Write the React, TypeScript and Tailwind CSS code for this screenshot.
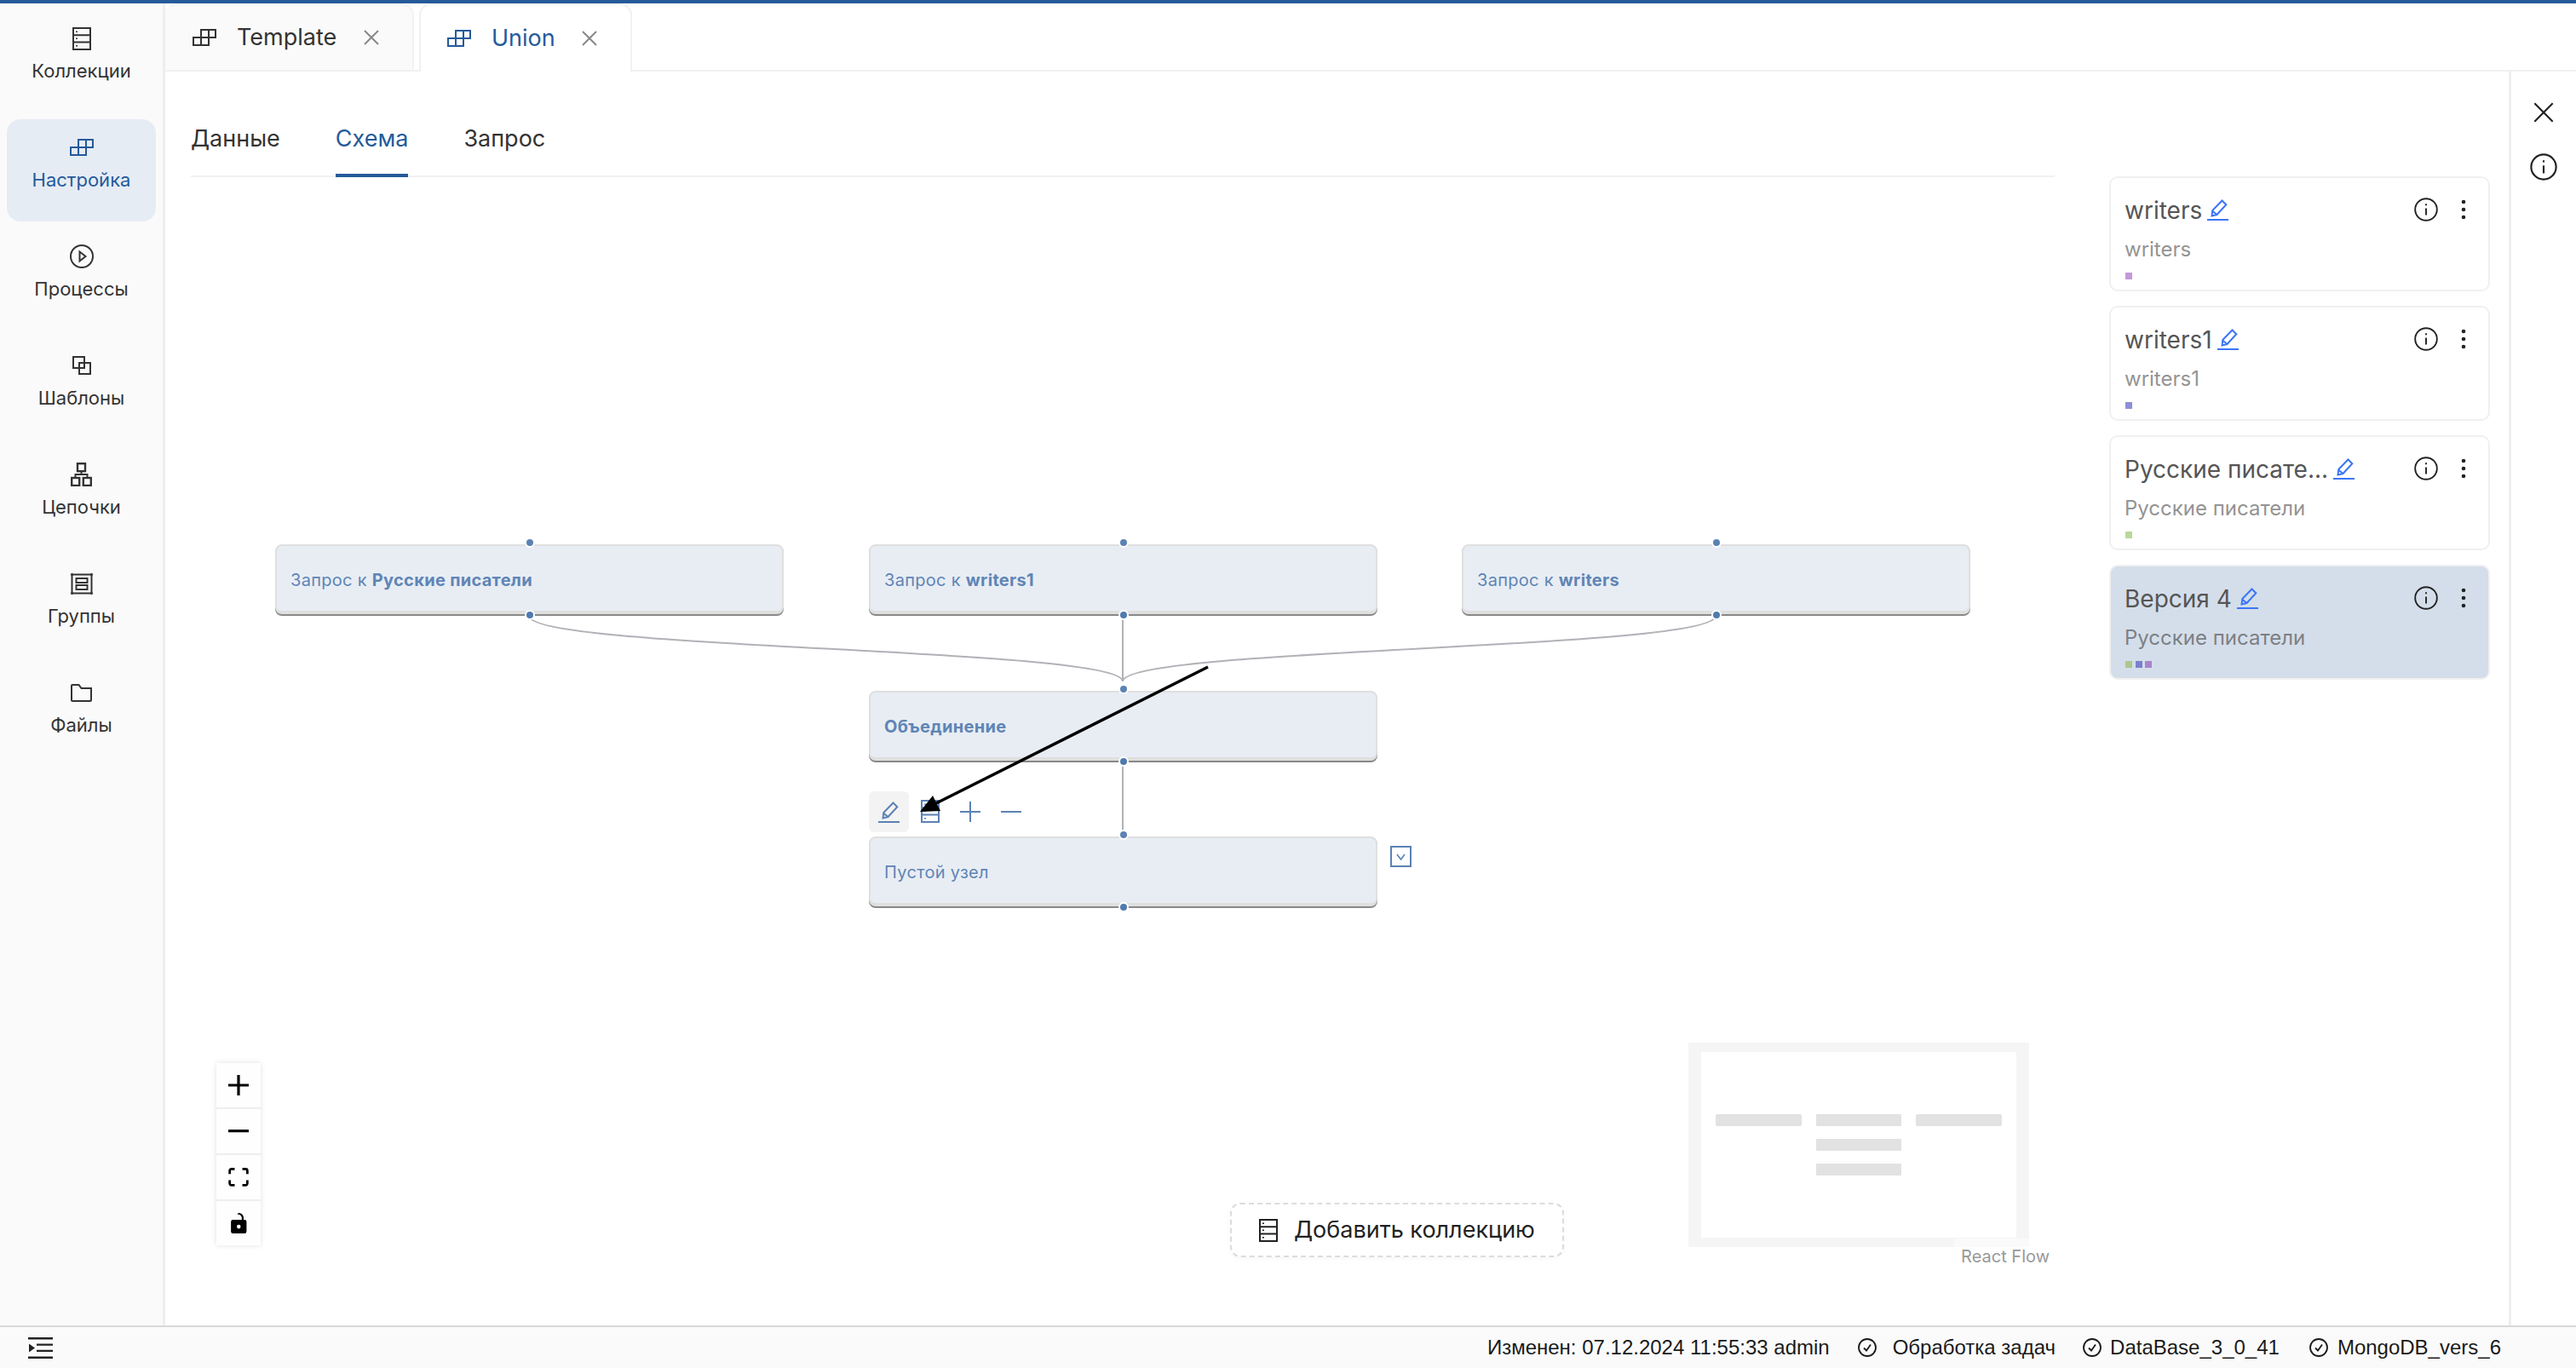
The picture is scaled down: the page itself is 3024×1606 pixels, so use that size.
import type { ReactNode } from "react";

function LayoutIcon() {
  return (
    <svg width="28" height="20" viewBox="0 0 28 20" fill="none" stroke="currentColor" strokeWidth="2">
      <path d="M1 10h18v9H1zM10 10v9M10 10V1h17v9h-8v-9M19 10v9" />
    </svg>
  );
}

function CollectionIcon({ className = "" }: { className?: string }) {
  return (
    <svg width="22" height="27" viewBox="0 0 22 27" fill="none" stroke="currentColor" strokeWidth="2" className={className}>
      <rect x="1" y="1" width="20" height="25" />
      <path d="M1 9.3h20M1 17.6h20" />
      <path d="M5 4.5v1.5M5 12.5v1.5M5 21v1.5" />
    </svg>
  );
}

function PlayIcon() {
  return (
    <svg width="28" height="28" viewBox="0 0 28 28" fill="none" stroke="currentColor" strokeWidth="2">
      <circle cx="14" cy="14" r="13" />
      <path d="M11.5 8.5v11l7-5.5z" />
    </svg>
  );
}

function TemplateIcon() {
  return (
    <svg width="22" height="22" viewBox="0 0 22 22" fill="none" stroke="currentColor" strokeWidth="2">
      <rect x="1" y="1" width="13" height="13" />
      <rect x="8" y="8" width="13" height="13" />
    </svg>
  );
}

function ChainIcon() {
  return (
    <svg width="25" height="28" viewBox="0 0 25 28" fill="none" stroke="currentColor" strokeWidth="2.4">
      <rect x="8" y="1.2" width="9" height="9" />
      <rect x="1.2" y="18" width="9" height="9" />
      <rect x="14.8" y="18" width="9" height="9" />
      <path d="M12.5 10v4M5.5 18v-4h14v4" strokeWidth="2" />
    </svg>
  );
}

function GroupIcon() {
  return (
    <svg width="28" height="27" viewBox="0 0 28 27" fill="none" stroke="currentColor" strokeWidth="2">
      <rect x="2.5" y="2.5" width="23" height="22" />
      <rect x="7.5" y="7" width="13" height="5" />
      <rect x="7.5" y="15" width="13" height="5" />
      <circle cx="2.5" cy="2.5" r="1.2" strokeWidth="1" />
      <circle cx="25.5" cy="2.5" r="1.2" strokeWidth="1" />
      <circle cx="2.5" cy="24.5" r="1.2" strokeWidth="1" />
      <circle cx="25.5" cy="24.5" r="1.2" strokeWidth="1" />
    </svg>
  );
}

function FolderIcon() {
  return (
    <svg width="25" height="21" viewBox="0 0 25 21" fill="none" stroke="currentColor" strokeWidth="2">
      <path d="M1 2V19a1 1 0 0 0 1 1H23a1 1 0 0 0 1-1V5H12.5L9.5 1H2a1 1 0 0 0-1 1z" />
    </svg>
  );
}

function PencilIcon({ className = "" }: { className?: string }) {
  return (
    <svg width="25" height="25" viewBox="0 0 25 25" fill="none" stroke="currentColor" strokeWidth="2" className={className}>
      <path d="M0 24h25" />
      <path d="M5.5 19.5l.8-6.5L17.5 1.5l4.8 4.8L11.5 18z" />
      <path d="M6 13.5l5.5 4.5" />
    </svg>
  );
}

function InfoIcon({ size = 28 }: { size?: number }) {
  return (
    <svg width={size} height={size} viewBox="0 0 28 28" fill="none" stroke="currentColor" strokeWidth="1.9">
      <circle cx="14" cy="14" r="12.8" />
      <path d="M14 12.5v8" />
      <path d="M14 7.2v2" />
    </svg>
  );
}

function DotsIcon() {
  return (
    <svg width="6" height="24" viewBox="0 0 6 24" fill="currentColor">
      <circle cx="3" cy="3" r="2.3" />
      <circle cx="3" cy="12" r="2.3" />
      <circle cx="3" cy="21" r="2.3" />
    </svg>
  );
}

function CloseIcon({ size = 18 }: { size?: number }) {
  return (
    <svg width={size} height={size} viewBox="0 0 18 18" fill="none" stroke="currentColor" strokeWidth={size > 20 ? 1.6 : 2}>
      <path d="M1 1l16 16M17 1L1 17" />
    </svg>
  );
}

function CheckCircle() {
  return (
    <svg width="22" height="22" viewBox="0 0 22 22" fill="none" stroke="currentColor" strokeWidth="1.8">
      <circle cx="11" cy="11" r="10" />
      <path d="M7 11.5l3 3 5-7" />
    </svg>
  );
}

const navItems: { label: string; icon: ReactNode; active?: boolean }[] = [
  { label: "Коллекции", icon: <CollectionIcon /> },
  { label: "Настройка", icon: <LayoutIcon />, active: true },
  { label: "Процессы", icon: <PlayIcon /> },
  { label: "Шаблоны", icon: <TemplateIcon /> },
  { label: "Цепочки", icon: <ChainIcon /> },
  { label: "Группы", icon: <GroupIcon /> },
  { label: "Файлы", icon: <FolderIcon /> },
];

function Sidebar() {
  return (
    <aside className="flex w-[194px] shrink-0 flex-col gap-[8px] border-r-[3px] border-[#eeeeee] bg-[#fafafa] px-[8px] pt-[8px]">
      {navItems.map((item) => (
        <div
          key={item.label}
          className={
            item.active
              ? "flex h-[120px] flex-col items-center rounded-[16px] bg-[#e6ecf4] pt-[19px] text-[#255a9a]"
              : "flex h-[120px] flex-col items-center rounded-[16px] pt-[19px] text-[#333333]"
          }
        >
          <div className="flex h-[28px] items-center justify-center">{item.icon}</div>
          <div className="mt-[11px] text-[22px] leading-[26px]">{item.label}</div>
        </div>
      ))}
    </aside>
  );
}

function TopTabs() {
  return (
    <div className="flex h-[80px] shrink-0 items-end gap-[6px] border-b-2 border-[#f1f1f1]">
      <div className="flex h-[78px] w-[292px] items-center rounded-t-[14px] border-2 border-b-0 border-l-0 border-[#f3f3f3] bg-[#fafafa] pl-[32px] text-[#333333]">
        <LayoutIcon />
        <span className="ml-[24px] text-[27px]">Template</span>
        <span className="ml-[32px] text-[#888888]"><CloseIcon /></span>
      </div>
      <div className="-mb-[2px] flex h-[80px] w-[250px] items-center rounded-t-[14px] border-2 border-b-0 border-[#f1f1f1] bg-white pl-[31px] text-[#255a9a]">
        <LayoutIcon />
        <span className="ml-[24px] text-[27px]">Union</span>
        <span className="ml-[31px] text-[#888888]"><CloseIcon /></span>
      </div>
    </div>
  );
}

function SubTabs() {
  return (
    <div className="flex h-[124px] shrink-0 items-end gap-[65px] border-b-2 border-[#f1f1f1] text-[27px] leading-[34px]">
      <div className="-mb-[2px] border-b-4 border-transparent pb-[24px] text-[#333333]">Данные</div>
      <div className="-mb-[2px] border-b-4 border-[#255a9a] pb-[24px] text-[#255a9a]">Схема</div>
      <div className="-mb-[2px] border-b-4 border-transparent pb-[24px] text-[#333333]">Запрос</div>
    </div>
  );
}

function FlowNode({ className, children }: { className: string; children: ReactNode }) {
  return (
    <div className={"absolute flex h-[82px] w-[597px] items-center rounded-[8px] border-2 border-b-4 border-[#dfdfdf] bg-[#e8edf4] pl-[16px] pt-[3px] text-[20px] tracking-[0.3px] text-[#5f85b5] shadow-[0_2px_0_#888888] " + className}>
      {children}
      <span className="absolute -top-[10px] left-1/2 h-[12px] w-[12px] -translate-x-1/2 rounded-full border-2 border-white bg-[#5b82b4]" />
      <span className="absolute -bottom-[11px] left-1/2 h-[12px] w-[12px] -translate-x-1/2 rounded-full border-2 border-white bg-[#4f7aaf]" />
    </div>
  );
}

function Controls() {
  const cell = "flex h-[54px] items-center justify-center border-b-2 border-[#eeeeee] bg-[#fefefe]";
  return (
    <div className="absolute left-[30px] top-[1040px] flex w-[52px] flex-col shadow-[0_0_6px_rgba(0,0,0,0.12)]">
      <div className={cell}>
        <svg width="24" height="24" viewBox="0 0 32 32"><path d="M32 18.133H18.133V32h-4.266V18.133H0v-4.266h13.867V0h4.266v13.867H32z" /></svg>
      </div>
      <div className={cell}>
        <svg width="24" height="4" viewBox="0 0 32 5"><path d="M0 0h32v4.2H0z" /></svg>
      </div>
      <div className={cell}>
        <svg width="24" height="22" viewBox="0 0 32 30"><path d="M3.692 4.63c0-.53.4-.938.939-.938h5.215V0H4.708C2.13 0 0 2.054 0 4.63v5.216h3.692V4.631zM27.354 0h-5.2v3.692h5.17c.53 0 .984.4.984.939v5.215H32V4.631A4.624 4.624 0 0027.354 0zm.954 24.83c0 .532-.4.94-.939.94h-5.215v3.768h5.215c2.577 0 4.631-2.13 4.631-4.707v-5.139h-3.692v5.139zm-23.677.94c-.531 0-.939-.4-.939-.94v-5.138H0v5.139c0 2.577 2.13 4.707 4.708 4.707h5.138V25.77H4.631z" /></svg>
      </div>
      <div className="flex h-[52px] items-center justify-center bg-[#fefefe]">
        <svg width="19" height="24" viewBox="0 0 25 32"><path d="M21.333 10.667H19.81V7.619C19.81 3.429 16.38 0 12.19 0c-4.114 1.828-1.37 2.133.305 2.438 1.676.305 4.42 2.59 4.42 5.181v3.048H3.047A3.056 3.056 0 000 13.714v15.238A3.056 3.056 0 003.048 32h18.285a3.056 3.056 0 003.048-3.048V13.714a3.056 3.056 0 00-3.048-3.047zM12.19 24.533a3.056 3.056 0 01-3.047-3.047 3.056 3.056 0 013.047-3.048 3.056 3.056 0 013.048 3.048 3.056 3.056 0 01-3.048 3.047z" /></svg>
      </div>
    </div>
  );
}

function MiniMap() {
  return (
    <div className="absolute left-[1758px] top-[1016px] h-[240px] w-[400px] bg-[#f5f5f5]">
      <div className="absolute left-[15px] top-[11px] h-[218px] w-[370px] bg-white" />
      <div className="absolute left-[32px] top-[84px] h-[14px] w-[101px] rounded-[2px] bg-[#e2e2e2]" />
      <div className="absolute left-[150px] top-[84px] h-[14px] w-[100px] bg-[#e2e2e2]" />
      <div className="absolute left-[267px] top-[84px] h-[14px] w-[101px] rounded-[2px] bg-[#e2e2e2]" />
      <div className="absolute left-[150px] top-[113px] h-[14px] w-[100px] bg-[#e2e2e2]" />
      <div className="absolute left-[150px] top-[142px] h-[14px] w-[100px] bg-[#e2e2e2]" />
    </div>
  );
}

function Canvas() {
  return (
    <div className="relative flex-1">
      <svg className="absolute left-0 top-0" width="2188" height="1348" fill="none" stroke="#b1b1b7" strokeWidth="2">
        <path d="M397 515C397 555 1094 552 1094 592" />
        <path d="M1790 515C1790 555 1094 552 1094 592" />
        <path d="M1094 515V592" />
        <path d="M1094 685V771" />
      </svg>

      <FlowNode className="left-[99px] top-[431px]">
        <span>Запрос к <b className="font-bold">Русские писатели</b></span>
      </FlowNode>
      <FlowNode className="left-[796px] top-[431px]">
        <span>Запрос к <b className="font-bold">writers1</b></span>
      </FlowNode>
      <FlowNode className="left-[1492px] top-[431px]">
        <span>Запрос к <b className="font-bold">writers</b></span>
      </FlowNode>
      <FlowNode className="left-[796px] top-[603px]">
        <b className="font-bold">Объединение</b>
      </FlowNode>
      <FlowNode className="left-[796px] top-[774px]">
        <span>Пустой узел</span>
      </FlowNode>

      <div className="absolute left-[796px] top-[721px] flex items-center text-[#5b82b4]">
        <div className="flex h-[48px] w-[47px] items-center justify-center rounded-[6px] bg-[#f3f3f3]">
          <PencilIcon />
        </div>
        <CollectionIcon className="ml-[14px] -mt-[2px]" />
        <svg className="ml-[24px]" width="24" height="24" viewBox="0 0 24 24" stroke="currentColor" strokeWidth="2">
          <path d="M0 12h24M12 0v24" />
        </svg>
        <svg className="ml-[24px]" width="24" height="24" viewBox="0 0 24 24" stroke="currentColor" strokeWidth="2">
          <path d="M0 12h24" />
        </svg>
      </div>

      <div className="absolute left-[1408px] top-[785px] flex h-[25px] w-[25px] items-center justify-center border-2 border-[#5b82b4] text-[#5b82b4]">
        <svg width="11" height="8" viewBox="0 0 11 8" fill="none" stroke="currentColor" strokeWidth="1.6">
          <path d="M1 1l4.5 6L10 1" />
        </svg>
      </div>

      <svg className="absolute left-0 top-0" width="2188" height="1348">
        <path d="M1194 575L873 736" stroke="#000000" strokeWidth="3.5" fill="none" />
        <path d="M856 745L880 744L871 726z" fill="#000000" />
      </svg>

      <Controls />
      <MiniMap />

      <div className="absolute left-[2070px] top-[1246px] flex h-[42px] w-[118px] items-center justify-end bg-white/50 pr-[6px] text-[20px] text-[#999999]">
        React Flow
      </div>

      <div className="absolute left-[1220px] top-[1204px] flex h-[64px] w-[392px] items-center rounded-[12px] border-2 border-dashed border-[#dcdcdc] bg-white pl-[32px] text-[27px] text-[#222222] shadow-[0_2px_4px_rgba(0,0,0,0.03)]">
        <CollectionIcon />
        <span className="ml-[19px]">Добавить коллекцию</span>
      </div>
    </div>
  );
}

const versions: { title: string; sub: string; colors: string[]; active?: boolean }[] = [
  { title: "writers", sub: "writers", colors: ["bg-[#c398d8]"] },
  { title: "writers1", sub: "writers1", colors: ["bg-[#8f8fd8]"] },
  { title: "Русские писате...", sub: "Русские писатели", colors: ["bg-[#b9d89a]"] },
  { title: "Версия 4", sub: "Русские писатели", colors: ["bg-[#a8c98f]", "bg-[#7a80cc]", "bg-[#ab82cc]"], active: true },
];

function VersionCards() {
  return (
    <div className="flex w-[469px] shrink-0 flex-col gap-[17px] pr-[22px] pt-[123px]">
      {versions.map((v) => (
        <div
          key={v.title}
          className={
            v.active
              ? "h-[135px] rounded-[10px] border-2 border-[#f0f0f0] bg-[#d4deea] pl-[16px] pr-[26px] pt-[21px]"
              : "h-[135px] rounded-[10px] border-2 border-[#f0f0f0] bg-white pl-[16px] pr-[26px] pt-[21px]"
          }
        >
          <div className="flex h-[34px] items-center justify-between">
            <div className="flex items-center gap-[6px]">
              <span className="text-[28px] leading-[34px] text-[#555555]">{v.title}</span>
              <PencilIcon className="-mt-[2px] text-[#3b76f6]" />
            </div>
            <div className="-mt-[2px] flex items-center gap-[27px] text-[#222222]">
              <InfoIcon />
              <DotsIcon />
            </div>
          </div>
          <div className={v.active ? "mt-[14px] text-[24px] leading-[30px] text-[#7d8085]" : "mt-[14px] text-[24px] leading-[30px] text-[#949494]"}>
            {v.sub}
          </div>
          <div className="mt-[12px] flex gap-[3.5px] pl-[1px]">
            {v.colors.map((c) => (
              <span key={c} className={"h-[8px] w-[8px] " + c} />
            ))}
          </div>
        </div>
      ))}
    </div>
  );
}

function StatusBar() {
  return (
    <footer className="flex h-[50px] shrink-0 items-center justify-between border-t-2 border-[#d9d9d9] bg-[#fafafa] pl-[33px] pr-[88px] font-['Liberation_Sans',sans-serif] text-[24px] text-[#1a1a1a]">
      <svg width="29" height="25" viewBox="0 0 29 25" fill="#222222">
        <path d="M0 0h29v2.4H0zM0 22.6h29v2.4H0zM10 7.6h19v2.2H10zM10 14.8h19v2.2H10zM1 7.5l7 5-7 5z" />
      </svg>
      <div className="flex items-center">
        <span>Изменен: 07.12.2024 11:55:33 admin</span>
        <span className="ml-[33px]"><CheckCircle /></span>
        <span className="ml-[19px]">Обработка задач</span>
        <span className="ml-[32px]"><CheckCircle /></span>
        <span className="ml-[10px]">DataBase_3_0_41</span>
        <span className="ml-[35px]"><CheckCircle /></span>
        <span className="ml-[11px]">MongoDB_vers_6</span>
      </div>
    </footer>
  );
}

export default function App() {
  return (
    <div className="flex h-[1606px] w-[3024px] flex-col overflow-hidden bg-white font-['Inter',sans-serif]">
      <div className="h-[4px] shrink-0 bg-[#255a9a]" />
      <div className="flex min-h-0 flex-1">
        <Sidebar />
        <div className="flex min-w-0 flex-1 flex-col">
          <TopTabs />
          <div className="flex min-h-0 flex-1">
            <div className="flex min-w-0 flex-1 flex-col pl-[30px] pr-[64px]">
              <SubTabs />
              <Canvas />
            </div>
            <VersionCards />
            <div className="flex w-[79px] shrink-0 flex-col items-center gap-[36px] border-l-[3px] border-[#eeeeee] pt-[36px] text-[#222222]">
              <CloseIcon size={24} />
              <InfoIcon size={32} />
            </div>
          </div>
        </div>
      </div>
      <StatusBar />
    </div>
  );
}
